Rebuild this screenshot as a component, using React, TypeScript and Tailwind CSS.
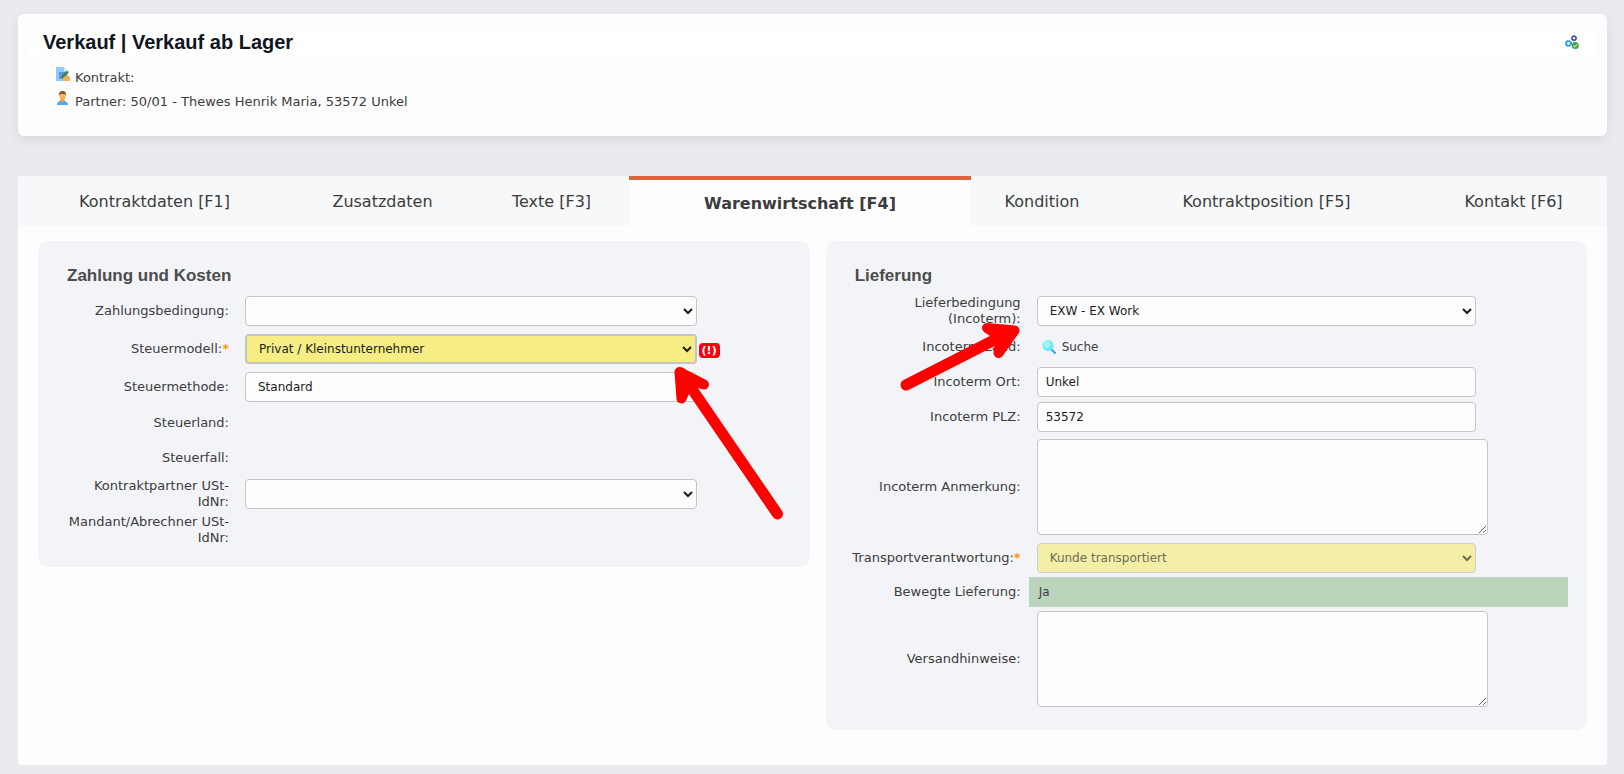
import React from 'react';

const tabs = [
  { label: 'Kontraktdaten [F1]', grow: 'grow-[273]' },
  { label: 'Zusatzdaten', grow: 'grow-[183]' },
  { label: 'Texte [F3]', grow: 'grow-[155]' },
  { label: 'Warenwirtschaft [F4]', grow: 'grow-[342]', active: true },
  { label: 'Kondition', grow: 'grow-[142]' },
  { label: 'Kontraktposition [F5]', grow: 'grow-[307]' },
  { label: 'Kontakt [F6]', grow: 'grow-[187]' },
];

const field = 'h-[30px] w-[84%] rounded border border-[#c8c4c6] bg-[#fdfdfd] px-2 text-xs text-[#1c1c1c]';
const area = 'block h-24 w-[calc(84%+12px)] resize rounded border border-[#c8c4c6] bg-[#fdfdfd] px-2 py-1 text-xs';

type RowProps = {
  label: string;
  id?: string;
  required?: boolean;
  height: string;
  labelWidth: string;
  children?: React.ReactNode;
};

const Row = ({ label, id, required, height, labelWidth, children }: RowProps) => (
  <div className={`flex items-center gap-4 ${height}`}>
    <label htmlFor={id} className={`shrink-0 text-right text-[13px] leading-4 ${labelWidth}`}>
      {label}
      {required && <span className="font-bold text-[#ff9800]">*</span>}
    </label>
    <div className="flex min-w-0 flex-1 items-center">{children}</div>
  </div>
);

const ContractIcon = () => (
  <svg viewBox="0 0 14 14" className="h-3.5 w-3.5 shrink-0">
    <path d="M0 0h8l4 4v10H0z" fill="#90caf9" />
    <path d="M8 0l4 4H8z" fill="#d6ebfb" />
    <path d="M3 5h7v7H3z" fill="#5c9be0" />
    <path d="M5 11l1-3 5-4 2 1-5 5z" fill="#4b7d46" />
    <path d="M6 12l5-4 3 2v4h-6z" fill="#f7b04a" />
    <path d="M6 11l5-5" stroke="#4b7d46" strokeWidth="1.200" />
  </svg>
);

const PartnerIcon = () => (
  <svg viewBox="0 0 14 14" className="h-3.5 w-3.5 shrink-0">
    <path d="M1 14c0-3 2-4.500 5-4.500s6 1.500 6 4.500z" fill="#42b0f5" />
    <path d="M4.500 8h4v2L6.500 12l-2-2z" fill="#f29b38" />
    <ellipse cx="6.500" cy="5" rx="3" ry="4" fill="#ffb050" />
    <path d="M3 5C2.500 1.500 4 0 6.500 0S10.500 1.500 10 5L9 3H4z" fill="#8a5a30" />
  </svg>
);

const SettingsIcon = () => (
  <svg viewBox="0 0 14 14" className="h-3.5 w-3.5">
    <circle cx="3.500" cy="8.500" r="2.200" fill="none" stroke="#2f9df0" strokeWidth="1.600" />
    <circle cx="3.500" cy="8.500" r="3" fill="none" stroke="#2f9df0" strokeWidth="1.200" strokeDasharray="1.300 1.056" />
    <circle cx="9" cy="3.200" r="1.900" fill="none" stroke="#4a55b5" strokeWidth="1.600" />
    <circle cx="9" cy="3.200" r="2.700" fill="none" stroke="#4a55b5" strokeWidth="0.900" strokeDasharray="1.100 1.020" />
    <circle cx="10.200" cy="10.500" r="3.500" fill="#43a047" />
    <path d="M8.400 10.500l1.300 1.300 2.400-2.500" fill="none" stroke="#b5e8a0" strokeWidth="1.200" />
  </svg>
);

const SearchIcon = () => (
  <svg viewBox="0 0 16 16" className="h-4 w-4">
    <path d="M10 10l4 4" stroke="#3d9ae8" strokeWidth="2" strokeLinecap="round" />
    <circle cx="7" cy="6.500" r="5.500" fill="#6fe6fb" />
    <circle cx="6" cy="5.500" r="3.500" fill="#a0f4ff" />
  </svg>
);

const App = () => {
  const left = 'w-[165px]';
  const right = 'w-[169px]';

  return (
    <div className="min-h-screen bg-[#eaebef] pt-3.5 pr-[17px] pb-[9px] pl-[18px] font-['DejaVu_Sans',Verdana,sans-serif] text-xs text-[#3c3c3c]">
      {/* Header */}
      <header className="h-[122px] rounded-md bg-[#fdfdfd] px-2.5 pt-3 shadow-[0_4px_12px_rgba(0,0,0,0.08)]">
        <div className="flex h-8 items-center justify-between rounded bg-white pr-[18px] pl-[15px]">
          <h1 className="font-['Liberation_Sans',Arial,sans-serif] text-xl font-bold text-[#101522]">
            Verkauf | Verkauf ab Lager
          </h1>
          <button type="button" aria-label="Einstellungen">
            <SettingsIcon />
          </button>
        </div>
        <div className="pt-[9px] pl-7 text-[13px]">
          <div className="flex h-6 gap-[5px]">
            <ContractIcon />
            <span className="leading-[22px]">Kontrakt:</span>
          </div>
          <div className="flex h-6 gap-[5px]">
            <PartnerIcon />
            <span className="leading-[22px]">Partner: 50/01 - Thewes Henrik Maria, 53572 Unkel</span>
          </div>
        </div>
      </header>

      <main className="relative mt-10 rounded bg-[#fdfdfd] pb-[35px]">
        {/* Tabs */}
        <nav className="flex h-[50px] overflow-hidden rounded-t">
          {tabs.map((tab) => (
            <button
              key={tab.label}
              type="button"
              className={`basis-0 pt-0.5 text-base whitespace-nowrap ${tab.grow} ${
                tab.active ? 'border-t-4 border-[#dc643c] bg-[#fdfdfd] font-bold' : 'bg-[#f7f8fa]'
              }`}
            >
              {tab.label}
            </button>
          ))}
        </nav>

        <div className="flex items-start gap-4 px-5 pt-[15px]">
          {/* Payment */}
          <section className="min-w-0 flex-[772] rounded-[10px] bg-[#f3f4f8] pt-[23px] pr-[27px] pb-5 pl-[26px]">
            <h2 className="h-7 pl-[3px] font-['Liberation_Sans',Arial,sans-serif] text-[17px] leading-6 font-bold text-[#4c4c4c]">
              Zahlung und Kosten
            </h2>
            <Row label="Zahlungsbedingung:" id="zahlung" height="h-[38px]" labelWidth={left}>
              <select id="zahlung" className={field}>
                <option></option>
              </select>
            </Row>
            <Row label="Steuermodell:" id="modell" required height="h-[38px]" labelWidth={left}>
              <select
                id="modell"
                className="h-[30px] w-[84%] rounded border-2 border-[#c8c4c6] bg-[#f6ee84] px-2 text-xs text-[#1c1c1c]"
              >
                <option>Privat / Kleinstunternehmer</option>
              </select>
              <span className="mt-[3px] ml-0.5 rounded bg-[#fb0010] px-[3px] text-[11px] leading-[15px] font-bold text-white">
                (!)
              </span>
            </Row>
            <Row label="Steuermethode:" id="methode" height="h-[38px]" labelWidth={left}>
              <select id="methode" className={field}>
                <option>Standard</option>
              </select>
            </Row>
            <Row label="Steuerland:" height="h-[34px]" labelWidth={left} />
            <Row label="Steuerfall:" height="h-[35px]" labelWidth={left} />
            <Row label="Kontraktpartner USt-IdNr:" id="ust" height="h-[38px]" labelWidth={left}>
              <select id="ust" className={field}>
                <option></option>
              </select>
            </Row>
            <Row label="Mandant/Abrechner USt-IdNr:" height="h-[34px]" labelWidth={left} />
          </section>

          {/* Delivery */}
          <section className="min-w-0 flex-[761] rounded-[10px] bg-[#f3f4f8] pt-[23px] pr-[27px] pb-[19px] pl-[26px]">
            <h2 className="h-7 pl-[3px] font-['Liberation_Sans',Arial,sans-serif] text-[17px] leading-6 font-bold text-[#4c4c4c]">
              Lieferung
            </h2>
            <Row label="Lieferbedingung (Incoterm):" id="incoterm" height="h-[38px]" labelWidth={right}>
              <select id="incoterm" className={field}>
                <option>EXW - EX Work</option>
              </select>
            </Row>
            <Row label="Incoterm Land:" id="land" height="h-[34px]" labelWidth={right}>
              <button id="land" type="button" className="flex items-center gap-[5px] pl-1">
                <SearchIcon />
                Suche
              </button>
            </Row>
            <Row label="Incoterm Ort:" id="ort" height="h-[35px]" labelWidth={right}>
              <input id="ort" className={field} defaultValue="Unkel" />
            </Row>
            <Row label="Incoterm PLZ:" id="plz" height="h-[35px]" labelWidth={right}>
              <input id="plz" className={field} defaultValue="53572" />
            </Row>
            <Row label="Incoterm Anmerkung:" id="anmerkung" height="h-[105px]" labelWidth={right}>
              <textarea id="anmerkung" className={area} />
            </Row>
            <Row label="Transportverantwortung:" id="transport" required height="h-[38px]" labelWidth={right}>
              <select
                id="transport"
                disabled
                className="h-[30px] w-[84%] rounded border border-[#cfcdce] bg-[#f4efa6] px-2 text-xs opacity-100 disabled:text-[#6e6d58]"
              >
                <option>Kunde transportiert</option>
              </select>
            </Row>
            <Row label="Bewegte Lieferung:" height="h-[30px]" labelWidth={right}>
              <span className="-mx-2 h-[30px] flex-1 bg-[#bad5bc] px-2.5 leading-[30px]">Ja</span>
            </Row>
            <Row label="Versandhinweise:" id="versand" height="h-[104px]" labelWidth={right}>
              <textarea id="versand" className={area} />
            </Row>
          </section>
        </div>

        {/* Marker arrows drawn over the form */}
        <svg
          viewBox="0 0 420 260"
          className="pointer-events-none absolute top-[104px] left-[622px] h-[260px] w-[420px]"
          fill="none"
          stroke="#ff0000"
          strokeWidth="10"
          strokeLinecap="round"
          strokeLinejoin="round"
        >
          <path d="M137.500 234L41 93" strokeWidth="11" />
          <path d="M39.500 92L64 104.500L49 101L41.500 118.500Z" fill="#ff0000" />
          <path d="M266 105L368 53" strokeWidth="11" />
          <path d="M347 48L374.500 50.500L358.500 73L361 57Z" fill="#ff0000" />
        </svg>
      </main>
    </div>
  );
};

export default App;
